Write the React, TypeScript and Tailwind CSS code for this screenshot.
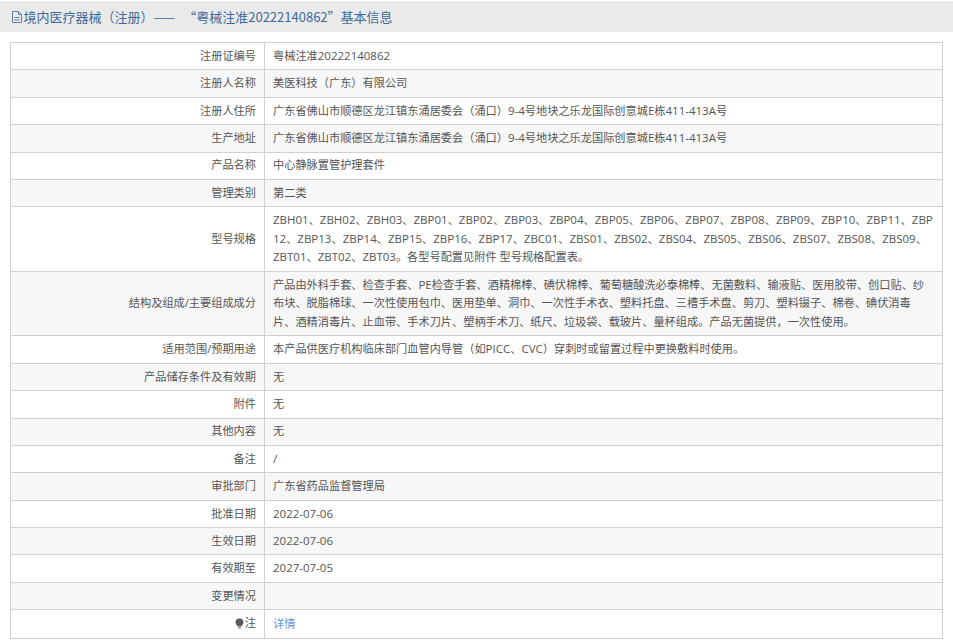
const rows: [string, string][] = [
  ['注册证编号', '粤械注准20222140862'],
  ['注册人名称', '美医科技（广东）有限公司'],
  ['注册人住所', '广东省佛山市顺德区龙江镇东涌居委会（涌口）9-4号地块之乐龙国际创意城E栋411-413A号'],
  ['生产地址', '广东省佛山市顺德区龙江镇东涌居委会（涌口）9-4号地块之乐龙国际创意城E栋411-413A号'],
  ['产品名称', '中心静脉置管护理套件'],
  ['管理类别', '第二类'],
  ['型号规格', 'ZBH01、ZBH02、ZBH03、ZBP01、ZBP02、ZBP03、ZBP04、ZBP05、ZBP06、ZBP07、ZBP08、ZBP09、ZBP10、ZBP11、ZBP\n12、ZBP13、ZBP14、ZBP15、ZBP16、ZBP17、ZBC01、ZBS01、ZBS02、ZBS04、ZBS05、ZBS06、ZBS07、ZBS08、ZBS09、\nZBT01、ZBT02、ZBT03。各型号配置见附件 型号规格配置表。'],
  ['结构及组成/主要组成成分', '产品由外科手套、检查手套、PE检查手套、酒精棉棒、碘伏棉棒、葡萄糖酸洗必泰棉棒、无菌敷料、输液贴、医用胶带、创口贴、纱\n布块、脱脂棉球、一次性使用包巾、医用垫单、洞巾、一次性手术衣、塑料托盘、三槽手术盘、剪刀、塑料镊子、棉卷、碘伏消毒\n片、酒精消毒片、止血带、手术刀片、塑柄手术刀、纸尺、垃圾袋、载玻片、量杯组成。产品无菌提供，一次性使用。'],
  ['适用范围/预期用途', '本产品供医疗机构临床部门血管内导管（如PICC、CVC）穿刺时或留置过程中更换敷料时使用。'],
  ['产品储存条件及有效期', '无'],
  ['附件', '无'],
  ['其他内容', '无'],
  ['备注', '/'],
  ['审批部门', '广东省药品监督管理局'],
  ['批准日期', '2022-07-06'],
  ['生效日期', '2022-07-06'],
  ['有效期至', '2027-07-05'],
  ['变更情况', ''],
];

// latin runs sit a touch larger than the CJK text
function Value({ text }: { text: string }) {
  return (
    <>
      {text.split('\n').map((line, l) => (
        <div key={l} className="min-h-[18.6px]">
          {line.split(/([\x21-\x7e]+)/).map((part, i) =>
            i % 2 === 1 ? (
              <span key={i} className="text-[11.5px]">
                {part}
              </span>
            ) : (
              part
            ),
          )}
        </div>
      ))}
    </>
  );
}

export default function App() {
  return (
    <div className="h-[642px] overflow-hidden bg-white pt-px font-['Open_Sans','Noto_Sans_CJK_SC',sans-serif] text-[11.2px] text-[#555]">
      <div className="flex h-[31px] items-center gap-px bg-[#eaeaea] pl-[10.5px] font-['Noto_Sans_CJK_SC',sans-serif] text-[13px] text-[#3c6a9c]">
        <svg width="12" height="14" viewBox="0 0 12 14" fill="none" stroke="#5f83a8" strokeWidth="1">
          <path d="M1.5 1.500h6l3 3v8h-9z" />
          <path d="M7.500 1.500v3h3M3.500 7.500h5M3.500 10h5" />
        </svg>
        <span className="[word-spacing:5px]">境内医疗器械（注册）—— “粤械注准20222140862”基本信息</span>
      </div>
      <table className="mx-[10px] mt-[10px] w-[933px] table-fixed border-collapse border border-[#d0d0d0]">
        <tbody>
          {rows.map(([label, value], i) => (
            <tr key={label} className={i % 2 === 1 ? 'bg-[#f7f7f7]' : 'bg-white'}>
              <td className="w-[254px] border border-[#d0d0d0] py-[3.9px] pr-[8px] text-right leading-[18.6px]">{label}</td>
              <td className="border border-[#d0d0d0] py-[3.9px] pr-[8px] pl-[8px] leading-[18.6px]">
                <Value text={value} />
              </td>
            </tr>
          ))}
          <tr className="bg-white">
            <td className="border border-[#d0d0d0] py-[3.9px] pr-[8px] text-right leading-[18.6px]">
              <span className="inline-flex items-center gap-px">
                <svg width="9" height="11" viewBox="0 0 9 11">
                  <path fill="#5a5a5a" d="M4.500 0.500a4 4 0 0 1 4 4c0 1.500-1.500 2.500-2.200 4h-3.600c-.7-1.500-2.200-2.500-2.200-4a4 4 0 0 1 4-4z" />
                  <path fill="#999" d="M3 9h3v1.500h-3z" />
                </svg>
                注
              </span>
            </td>
            <td className="border border-[#d0d0d0] py-[3.9px] pl-[8px] leading-[18.6px] text-[#5a9bdc]">详情</td>
          </tr>
        </tbody>
      </table>
    </div>
  );
}
